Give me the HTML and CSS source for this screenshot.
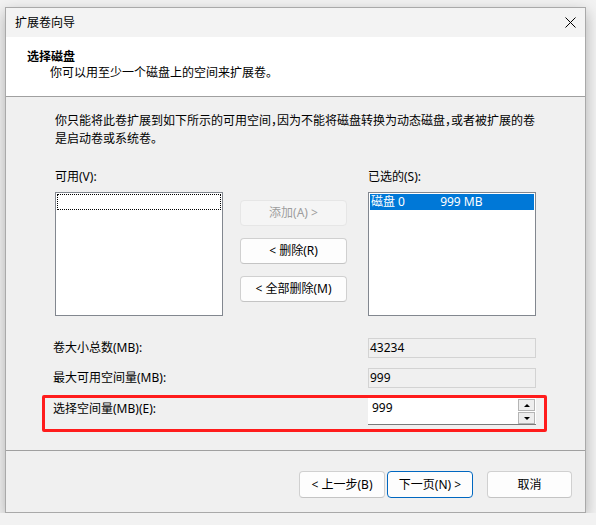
FILE: index.html
```html
<!DOCTYPE html>
<html lang="zh-CN">
<head>
    <meta charset="UTF-8">
    <title>扩展卷向导</title>
    <link rel="stylesheet" href="styles.css">
</head>
<body>

    <div class="window">
        <div class="titlebar">
            <span class="title">扩展卷向导</span>
            <svg class="close" width="11" height="11" viewBox="0 0 11 11">
                <path d="M0.5 0.5 L10.5 10.5 M10.5 0.5 L0.5 10.5" stroke="#000" stroke-width="1" fill="none"/>
            </svg>
        </div>

        <div class="header">
            <h1>选择磁盘</h1>
            <p>你可以用至少一个磁盘上的空间来扩展卷。</p>
        </div>

        <div class="content">
            <p class="intro">你只能将此卷扩展到如下所示的可用空间，因为不能将磁盘转换为动态磁盘，或者被扩展的卷是启动卷或系统卷。</p>

            <div class="picker">
                <div class="list-label col-left">可用(V):</div>
                <div class="list-label col-right">已选的(S):</div>

                <div class="listbox col-left">
                    <div class="item focused"></div>
                </div>

                <div class="move-buttons col-mid">
                    <button class="btn" disabled>添加(A) &gt;</button>
                    <button class="btn">&lt; 删除(R)</button>
                    <button class="btn">&lt; 全部删除(M)</button>
                </div>

                <div class="listbox col-right">
                    <div class="item selected">
                        <span class="disk-name">磁盘 0</span>
                        <span>999 MB</span>
                    </div>
                </div>
            </div>

            <div class="fields">
                <div class="field-row">
                    <span>卷大小总数(MB):</span>
                    <div class="readonly">43234</div>
                </div>
                <div class="field-row">
                    <span>最大可用空间量(MB):</span>
                    <div class="readonly">999</div>
                </div>
                <div class="field-row marked">
                    <span class="spin-label">选择空间量(MB)(E):</span>
                    <div class="spin">
                        <div class="spin-value">999</div>
                        <div class="spin-buttons">
                            <div class="spin-btn"><i class="arrow up"></i></div>
                            <div class="spin-btn"><i class="arrow down"></i></div>
                        </div>
                    </div>
                </div>
            </div>
        </div>

        <div class="footer">
            <button class="btn wide">&lt; 上一步(B)</button>
            <button class="btn wide default">下一页(N) &gt;</button>
            <button class="btn wide cancel">取消</button>
        </div>
    </div>

</body>
</html>
```

FILE: styles.css
```css
body {
    margin: 0;
    padding: 7px 0 0 5px;
    background-color: #f2f2f2;
    font-family: "Noto Sans", "Noto Sans CJK SC", sans-serif;
    font-size: 12px;
    font-feature-settings: "halt";
    color: #000;
}

.window {
    width: 579px;
    height: 504px;
    border: 1px solid #a9a9a9;
    background-color: #f0f0f0;
    box-shadow: 0 5px 14px rgba(0, 0, 0, 0.28);
    display: flex;
    flex-direction: column;
}

.titlebar {
    height: 29px;
    background-color: #f3f3f3;
    display: flex;
    align-items: center;
    justify-content: space-between;
    padding: 0 9px;
}

.title {
    line-height: 18px;
}

.close {
    display: block;
}

.header {
    background: #fff;
    border-bottom: 1px solid #a0a0a0;
    padding: 12px 0 0 21px;
    height: 47px;
}

.header h1 {
    margin: 0;
    font-size: 12px;
    font-weight: bold;
    line-height: 16px;
}

.header p {
    margin: 0 0 0 23px;
    line-height: 16px;
}

.content {
    height: 354px;
    border-bottom: 1px solid #a0a0a0;
    padding-top: 15px;
    box-sizing: border-box;
}

.intro {
    margin: 0 0 0 49px;
    width: 488px;
    line-height: 18px;
}

/* two list boxes with the move buttons between them */
.picker {
    margin: 20px 0 0 49px;
    display: grid;
    grid-template-columns: 168px 17px 107px 21px 168px;
    row-gap: 6px;
}

.col-left {
    grid-column: 1;
}

.col-mid {
    grid-column: 3;
}

.col-right {
    grid-column: 5;
}

.list-label {
    line-height: 18px;
}

.listbox {
    height: 124px;
    background: #fff;
    border: 1px solid #82878f;
    box-sizing: border-box;
    padding: 1px;
}

.item {
    height: 16px;
    line-height: 16px;
    box-sizing: border-box;
}

.item.focused {
    border: 1px dotted #000;
}

.item.selected {
    background-color: #0078d7;
    color: #fff;
    padding-left: 1px;
}

.disk-name {
    display: inline-block;
    width: 66px;
}

.move-buttons {
    padding-top: 8px;
    display: flex;
    flex-direction: column;
    gap: 12px;
}

.btn {
    font-family: inherit;
    font-size: 12px;
    font-feature-settings: "halt";
    color: #000;
    height: 26px;
    padding: 0;
    background-color: #fdfdfd;
    border: 1px solid #d0d0d0;
    border-bottom-color: #c4c4c4;
    border-radius: 4px;
    line-height: 18px;
}

.btn:disabled {
    background-color: #f5f5f5;
    border-color: #e6e6e6;
    color: #9d9d9d;
}

/* size rows */
.fields {
    margin-top: 22px;
}

.field-row {
    display: grid;
    grid-template-columns: 1fr 168px;
    align-items: center;
    margin: 0 49px 0 47px;
    line-height: 18px;
}

.field-row + .field-row {
    margin-top: 10px;
}

.readonly {
    height: 20px;
    box-sizing: border-box;
    border: 1px solid #d3d3d3;
    padding-left: 1px;
    line-height: 18px;
}

.field-row.marked {
    margin: 7px 38px 0 36px;
    padding: 0 8px 4px 8px;
    border: 3px solid #ff1c1c;
    border-radius: 2px;
    align-items: start;
}

.spin-label {
    padding-top: 2px;
}

.spin {
    height: 27px;
    display: flex;
    background: #fff;
    border-bottom: 1px solid #7a7a7a;
    box-sizing: border-box;
}

.spin-value {
    flex: 1;
    padding: 1px 0 0 4px;
    line-height: 18px;
}

.spin-buttons {
    width: 17px;
    display: flex;
    flex-direction: column;
    gap: 1px;
    padding: 1px 1px 0 0;
}

.spin-btn {
    flex: 1;
    background: #eeeeee;
    border: 1px solid #b4b4b4;
    display: flex;
    align-items: center;
    justify-content: center;
}

.arrow {
    width: 0;
    height: 0;
    border-left: 3px solid transparent;
    border-right: 3px solid transparent;
}

.arrow.up {
    border-bottom: 3px solid #000;
}

.arrow.down {
    border-top: 3px solid #000;
}

.footer {
    flex: 1;
    display: flex;
    align-items: flex-start;
    justify-content: flex-end;
    padding: 20px 13px 0 0;
    gap: 2px;
}

.btn.wide {
    width: 86px;
    height: 27px;
}

.btn.default {
    border-color: #0067c0;
}

.btn.cancel {
    width: 85px;
    margin-left: 12px;
}
```
